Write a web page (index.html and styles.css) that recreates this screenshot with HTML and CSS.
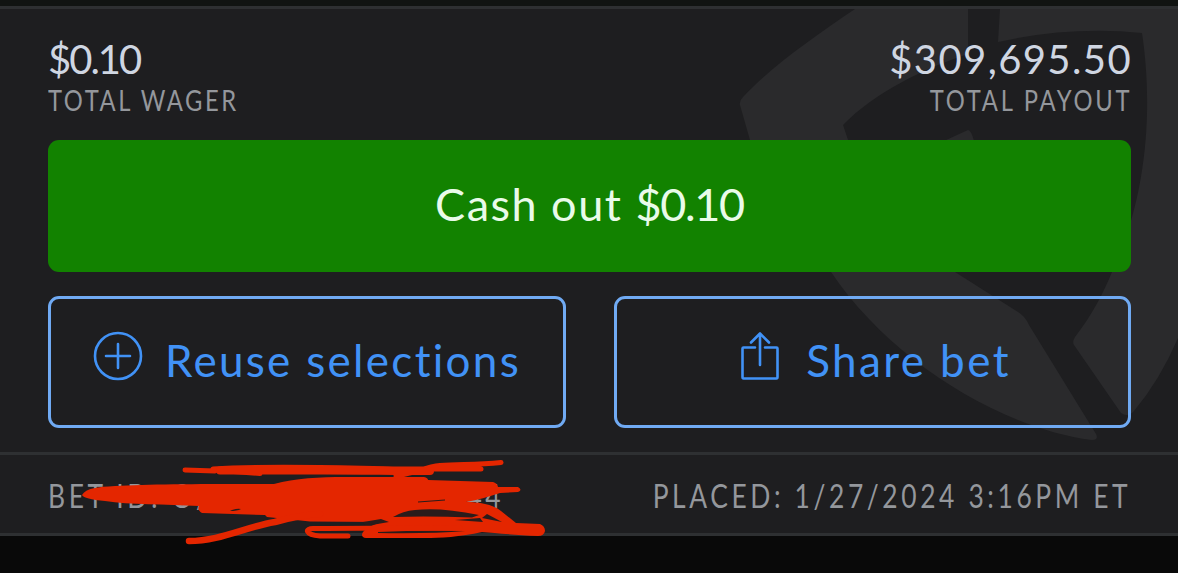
FILE: index.html
```
<!DOCTYPE html>
<html lang="en">
<head>
    <meta charset="UTF-8">
    <meta name="viewport" content="width=device-width, initial-scale=1.0">
    <title>Bet Slip</title>
    <link rel="stylesheet" href="styles.css">
</head>
<body>
    <div class="bet-card">
        <svg class="watermark" viewBox="0 9 1178 443" aria-hidden="true">
            <path d="M855 9H968V54C925 68 875 92 843 125L848 140C865 200 900 240 955 272L1018 312Q1025 316 1029 325L1096 434Q1099 440 1092 440C1000 428 890 360 831 272C790 220 765 180 750 140L740 105Q739 101 743 97C770 68 812 38 855 9Z"/>
            <path d="M1000 9H1178V338Q1160 380 1134 411Q1128 418 1121 413L1074 345Q1072 342 1075 337C1092 315 1103 294 1112 272C1150 190 1152 100 1142 33Q1070 26 998 42Z"/>
            <path d="M944 141L968 130Q971 130 974 141Z"/>
        </svg>

        <div class="totals">
            <div class="total">
                <div class="amount"><span class="amount-wager">$0.10</span></div>
                <div class="label"><span class="label-wager">TOTAL WAGER</span></div>
            </div>
            <div class="total total-right">
                <div class="amount"><span class="amount-payout">$309,695.50</span></div>
                <div class="label"><span class="label-payout">TOTAL PAYOUT</span></div>
            </div>
        </div>

        <button class="cash-out-btn">Cash out <span class="cash-value">$0.10</span></button>

        <div class="actions">
            <button class="outline-btn">
                <svg class="icon-plus" viewBox="0 0 50 50">
                    <circle cx="25" cy="25" r="23"/>
                    <path d="M13 25H37M25 13V37"/>
                </svg>
                <span class="reuse-text">Reuse selections</span>
            </button>
            <button class="outline-btn">
                <svg class="icon-share" viewBox="0 0 40 50">
                    <path d="M15 16.5H3.5Q2.5 16.5 2.5 17.5V46Q2.5 47.5 3.5 47.5H36.5Q37.5 47.5 37.5 46V17.5Q37.5 16.5 36.5 16.5H25M20 34V2.5M11 11.5L20 2.5L29 11.5"/>
                </svg>
                <span class="share-text">Share bet</span>
            </button>
        </div>
    </div>

    <footer>
        <div class="bet-id"><span class="bet-id-text">BET ID: O/</span><span class="bet-id-end">44</span></div>
        <div class="placed"><span class="placed-text">PLACED: 1/27/2024 3:16PM ET</span></div>
        <!-- Marker strokes over the bet id -->
        <svg class="scribble" viewBox="70 455 490 95" aria-hidden="true">
            <path class="fill" d="M82 495C86 488 98 487 115 486C150 484 200 484 274 484C295 478 320 477 345 477H424Q428 478 428 480L493 482Q497 483 498 487L518 487Q523 490 518 492L500 493C488 497 478 500 466 502C480 502 494 505 501 511L516 523L540 524Q545 526 545 531Q544 536 538 536C515 535 495 533 482 532C460 537 440 538 425 538H366Q360 537 363 532C370 524 382 523 380 522L310 521.500L267 517L265 515L202 513Q197 510 199 506C165 504 130 505 105 501Q84 499 82 495Z"/>
            <path class="gap" d="M232 510Q238 508 241 509Q237 511 230 511Z"/>
            <path class="gap" d="M393 517Q403 511 415 510Q440 507 479 515L472 517.500Q430 516 393 517Z"/>
            <path class="gap" d="M363 522L381 519L389 522L366 526ZM455 520L480 518L483 522Z"/>
            <path class="gap" d="M378 532Q420 530 465 531Q430 534 378 533Z"/>
            <path class="gap" d="M487 514L502 522L482 518ZM418 501.500L445 499.500V500.500L418 502.500Z"/>
            <path d="M185 470L215 471M213 469C270 465 340 468 400 469H481M214 470L260 473.500M396 476C418 472 425 467 440 465.500C460 464 475 465 501 462.500"/>
            <path class="thick" d="M220 470.500H300C340 470 390 471 430 471"/>
            <path class="medium" d="M189 541C220 541 245 527 275 522Q300 515 320 514"/>
            <path d="M348 536H320C305 535 304 528 314 528.500Q360 528 460 528"/>
        </svg>
    </footer>
</body>
</html>
```
FILE: styles.css
```
:root {
    --page-background: #090909;
    --card-background: #1e1e20;
    --watermark: #2a2a2c;
    --line: #2e3032;
    --amount-color: #cfd6e2;
    --label-color: #94979c;
    --green: #128200;
    --blue: #4192f6;
    --blue-border: #70aaf3;
    --marker: #e42600;
}

* {
    margin: 0;
    padding: 0;
    box-sizing: border-box;
}

body {
    font-family: Lato, 'Liberation Sans', sans-serif;
    background-color: var(--page-background);
    border-top: 6px solid #111412;
    height: 573px;
    overflow: hidden;
}

.bet-card {
    position: relative;
    height: 449px;
    padding: 30px 47px 0 48px;
    background-color: var(--card-background);
    border-top: 3px solid var(--line);
}

.watermark {
    position: absolute;
    top: 0;
    left: 0;
    width: 1178px;
    height: 443px;
    fill: var(--watermark);
}

.totals {
    position: relative;
    display: flex;
    justify-content: space-between;
    height: 101px;
}

.total-right {
    text-align: right;
}

.amount {
    font-size: 40px;
    line-height: 40px;
    height: 45px;
    color: var(--amount-color);
}

.label {
    font-size: 28px;
    line-height: 32px;
    color: var(--label-color);
}

/* Narrow lettering */
.amount span,
.label span,
.bet-id span,
.placed span {
    display: inline-block;
    transform-origin: left;
    white-space: nowrap;
}

.amount-wager {
    letter-spacing: -2px;
}

.total-right .amount-payout {
    letter-spacing: 1.4px;
    margin-right: -1px;
}

.label .label-wager {
    letter-spacing: 3px;
    transform: scaleX(0.85);
}

.label .label-payout {
    letter-spacing: 3.2px;
    margin-right: -1px;
    transform: scaleX(0.85);
    transform-origin: right;
}

button {
    position: relative;
    font-family: inherit;
    cursor: pointer;
}

.cash-out-btn {
    display: block;
    width: 100%;
    height: 132px;
    padding-bottom: 4px;
    border: none;
    border-radius: 11px;
    background-color: var(--green);
    color: #e9fbe9;
    font-size: 45px;
    letter-spacing: 1.5px;
}

.cash-value {
    letter-spacing: -1.3px;
}

.actions {
    display: grid;
    grid-template-columns: 518px 517px;
    gap: 48px;
    margin-top: 24px;
}

.outline-btn {
    display: flex;
    align-items: center;
    justify-content: center;
    gap: 22px;
    height: 132px;
    padding-bottom: 4px;
    border: 3px solid var(--blue-border);
    border-radius: 11px;
    background: transparent;
    color: var(--blue);
    font-size: 44px;
    white-space: nowrap;
}

.outline-btn svg {
    flex-shrink: 0;
    height: 50px;
    margin-top: -9px;
    fill: none;
    stroke: currentColor;
    stroke-width: 2.6;
    stroke-linecap: round;
    stroke-linejoin: round;
}

.icon-plus {
    width: 50px;
}

.icon-share {
    width: 40px;
}

.reuse-text {
    letter-spacing: 2.3px;
}

.share-text {
    letter-spacing: 2.4px;
    margin-left: 4px;
    margin-right: -6px;
}

footer {
    position: relative;
    display: flex;
    justify-content: space-between;
    align-items: center;
    height: 81px;
    padding: 2px 50px 0 48px;
    background-color: var(--card-background);
    border-bottom: 3px solid var(--line);
    box-shadow: 0 -3px 0 var(--line);
    color: var(--label-color);
    font-size: 33px;
}

.bet-id {
    display: flex;
    justify-content: space-between;
    width: 453px;
}

.bet-id .bet-id-text {
    letter-spacing: 4.5px;
    transform: scaleX(0.8);
}

.bet-id .bet-id-end {
    letter-spacing: 4.5px;
    margin-right: -3px;
    transform: scaleX(0.8);
    transform-origin: right;
}

.placed .placed-text {
    letter-spacing: 4.5px;
    margin-right: -3px;
    transform: scaleX(0.8);
    transform-origin: right;
}

.scribble {
    position: absolute;
    top: 0;
    left: 70px;
    width: 490px;
    height: 95px;
    fill: none;
    stroke: var(--marker);
    stroke-width: 5;
    stroke-linecap: round;
    stroke-linejoin: round;
}

.scribble .fill {
    fill: var(--marker);
    stroke: none;
}

.scribble .medium {
    stroke-width: 6.5;
}

.scribble .thick {
    stroke-width: 8;
}

.scribble .gap {
    fill: #2a1c1b;
    stroke: none;
}
```
